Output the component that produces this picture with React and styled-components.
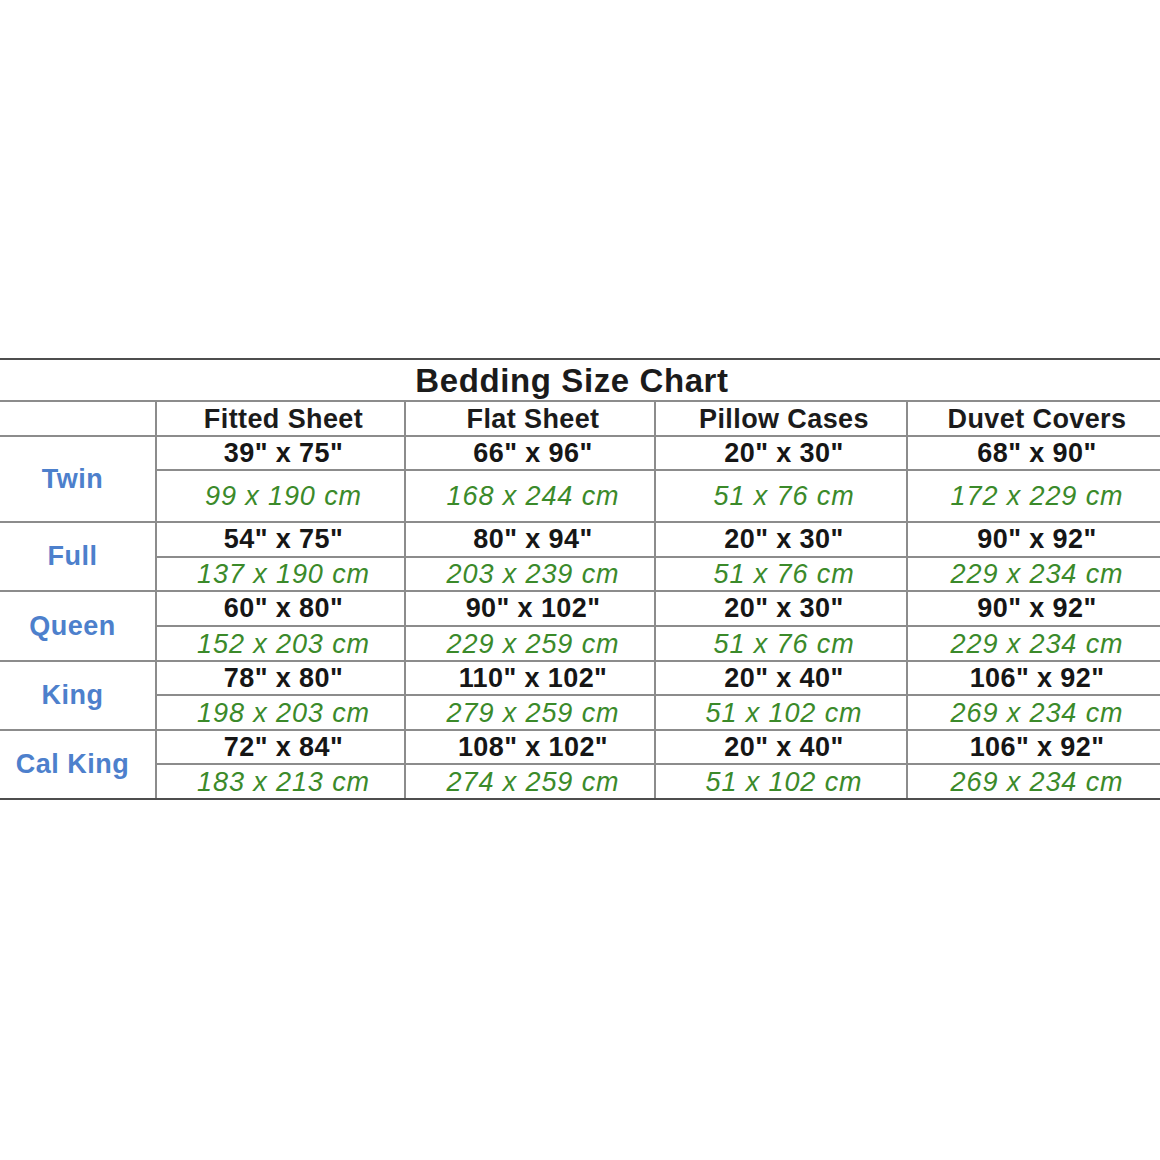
import React from "react";
import styled, { createGlobalStyle } from "styled-components";

const Global = createGlobalStyle`
  html, body { margin: 0; padding: 0; background: #ffffff; }
  body { font-family: "Liberation Sans", Arial, sans-serif; }
`;

const Page = styled.div`
  width: 1160px;
  height: 1160px;
  padding-top: 358px;
  box-sizing: border-box;
  overflow: hidden;
`;

const Chart = styled.div`
  width: 1160px;
  border-top: 2px solid #4e4e4e;
  border-bottom: 2px solid #4e4e4e;
`;

const Title = styled.div`
  height: 42px;
  box-sizing: border-box;
  border-bottom: 2px solid #8c8c8c;
  display: flex;
  align-items: center;
  justify-content: center;
  padding-right: 16px;
  padding-top: 1px;
  font-weight: 700;
  font-size: 33px;
  letter-spacing: 0.6px;
  color: #1b1b1b;
`;

const Grid = styled.div`
  display: grid;
  grid-template-columns: 155px 249px 250px 252px 254px;
  grid-template-rows: 35px 34px 52px 35px 34px 35px 35px 34px 35px 34px 33px;
`;

const Cell = styled.div`
  box-sizing: border-box;
  display: flex;
  align-items: center;
  justify-content: center;
  border-bottom: ${(p) => (p.$last ? "none" : "2px solid #8c8c8c")};
  border-left: ${(p) => (p.$first ? "none" : "2px solid #8c8c8c")};
  font-size: 27px;
  letter-spacing: 0.4px;
  white-space: nowrap;
  padding-left: 6px;
`;

const HeadCell = styled(Cell)`
  font-weight: 700;
  color: #1b1b1b;
  padding-top: 1px;
`;

const Label = styled(Cell)`
  grid-row: span 2;
  font-weight: 700;
  font-size: 27px;
  letter-spacing: 0.5px;
  color: #4d80cc;
  padding-left: 0;
  padding-right: 10px;
`;

const Inch = styled(Cell)`
  font-weight: 700;
  color: #161616;
`;

const Metric = styled(Cell)`
  font-style: italic;
  color: #3b8a2a;
  padding-top: 1px;
  letter-spacing: 0.9px;
`;

const headers = ["Fitted Sheet", "Flat Sheet", "Pillow Cases", "Duvet Covers"];

const rows = [
  {
    name: "Twin",
    inch: ['39" x 75"', '66" x 96"', '20" x 30"', '68" x 90"'],
    cm: ["99 x 190 cm", "168 x 244 cm", "51 x 76 cm", "172 x 229 cm"],
  },
  {
    name: "Full",
    inch: ['54" x 75"', '80" x 94"', '20" x 30"', '90" x 92"'],
    cm: ["137 x 190 cm", "203 x 239 cm", "51 x 76 cm", "229 x 234 cm"],
  },
  {
    name: "Queen",
    inch: ['60" x 80"', '90" x 102"', '20" x 30"', '90" x 92"'],
    cm: ["152 x 203 cm", "229 x 259 cm", "51 x 76 cm", "229 x 234 cm"],
  },
  {
    name: "King",
    inch: ['78" x 80"', '110" x 102"', '20" x 40"', '106" x 92"'],
    cm: ["198 x 203 cm", "279 x 259 cm", "51 x 102 cm", "269 x 234 cm"],
  },
  {
    name: "Cal King",
    inch: ['72" x 84"', '108" x 102"', '20" x 40"', '106" x 92"'],
    cm: ["183 x 213 cm", "274 x 259 cm", "51 x 102 cm", "269 x 234 cm"],
  },
];

export default function App() {
  return (
    <Page>
      <Global />
      <Chart>
        <Title>Bedding Size Chart</Title>
        <Grid>
          <HeadCell $first />
          {headers.map((h) => (
            <HeadCell key={h}>{h}</HeadCell>
          ))}
          {rows.map((r, ri) => {
            const last = ri === rows.length - 1;
            return (
              <React.Fragment key={r.name}>
                <Label $first $last={last}>{r.name}</Label>
                {r.inch.map((v, i) => (
                  <Inch key={"i" + i}>{v}</Inch>
                ))}
                {r.cm.map((v, i) => (
                  <Metric key={"c" + i} $last={last}>{v}</Metric>
                ))}
              </React.Fragment>
            );
          })}
        </Grid>
      </Chart>
    </Page>
  );
}
